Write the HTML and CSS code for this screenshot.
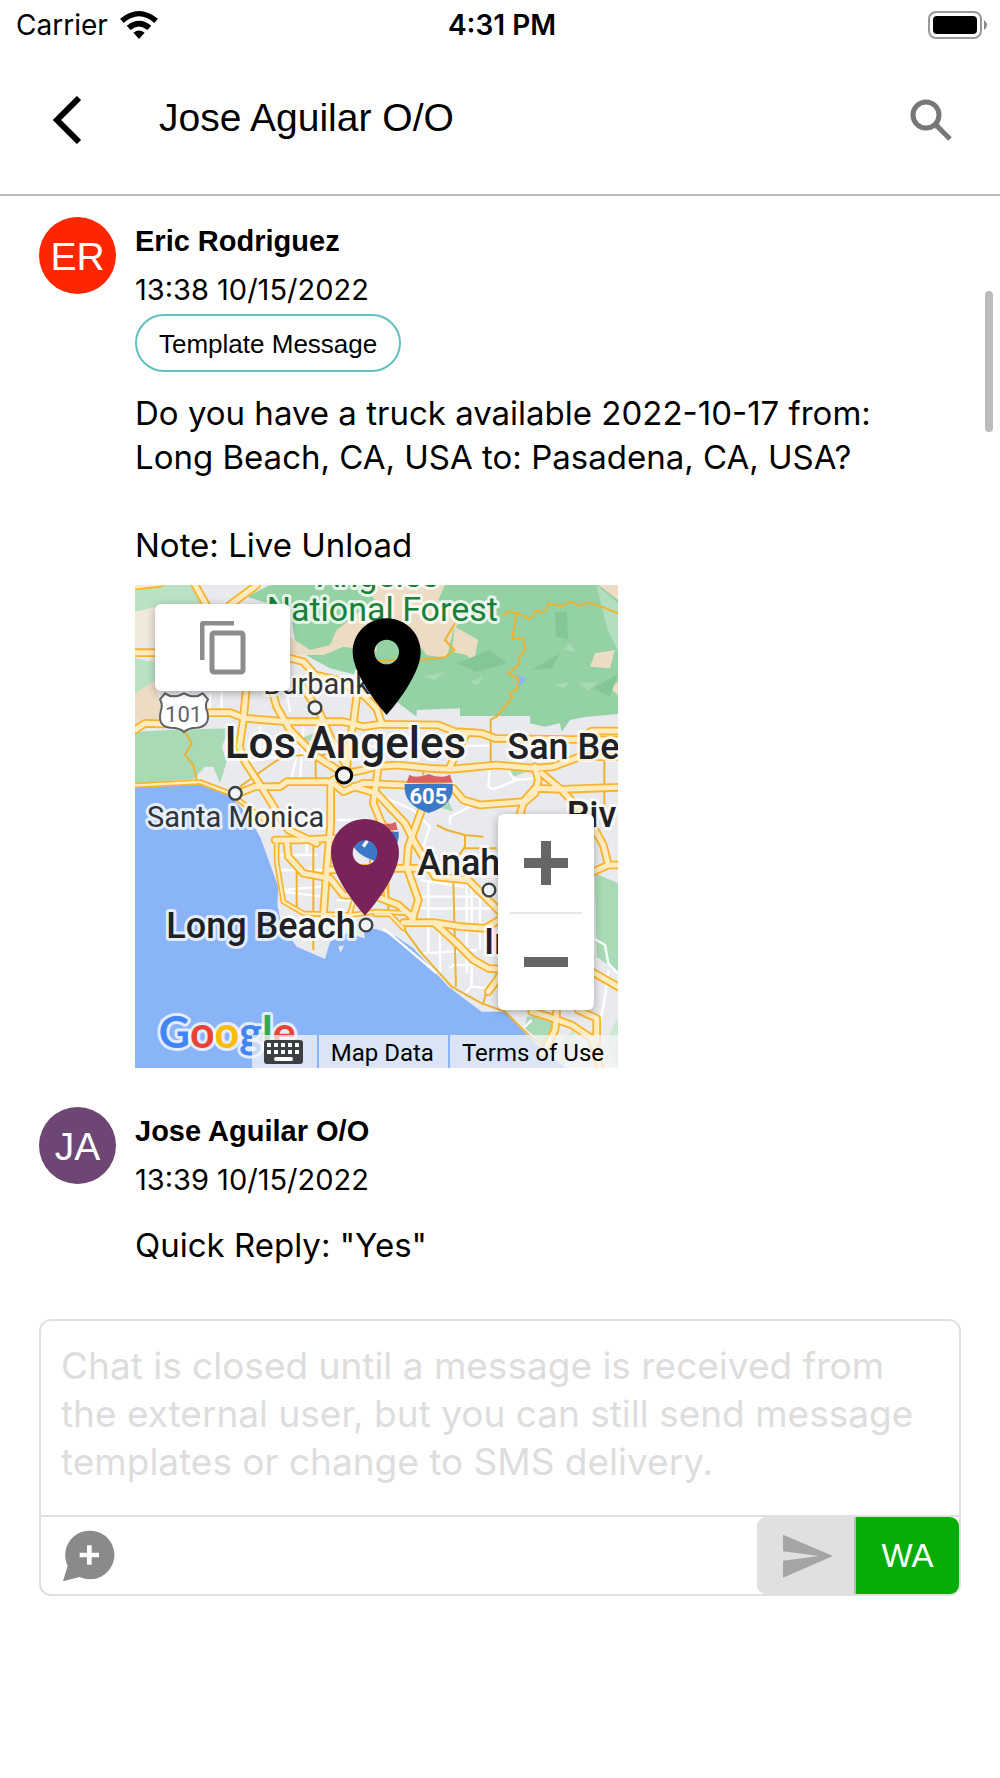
FILE: index.html
```html
<!DOCTYPE html>
<html lang="en">
<head>
  <meta charset="UTF-8">
  <title>Jose Aguilar O/O</title>
  <meta name="viewport" content="width=device-width, initial-scale=1.0">
  <link rel="stylesheet" href="styles.css">
</head>
<body>

  <div class="status-bar">
    <div class="carrier">
      <span>Carrier</span>
      <svg width="38" height="28" viewBox="0 0 108 80">
        <path d="M0 22Q54-22 108 22L98 34Q54-4 10 34Z"/>
        <path d="M19 42Q54 14 89 42L78 54Q54 34 30 54Z"/>
        <path d="M38 62Q54 50 70 62L54 80Z"/>
      </svg>
    </div>
    <div class="clock">4:31 PM</div>
    <div class="battery">
      <svg width="60" height="28" viewBox="0 0 60 28">
        <rect x="1" y="1" width="52" height="26" rx="7" fill="#fff" stroke="#999" stroke-width="2"/>
        <rect x="5" y="5" width="44" height="18" rx="4"/>
        <path d="M56 9Q62 14 56 19Z" fill="#888"/>
      </svg>
    </div>
  </div>

  <header class="topbar">
    <button class="icon-btn" aria-label="Back">
      <svg width="28" height="48" viewBox="0 0 28 48">
        <path d="M26 2L4 24L26 46" fill="none" stroke="#000" stroke-width="6"/>
      </svg>
    </button>
    <h1>Jose Aguilar O/O</h1>
    <button class="icon-btn" aria-label="Search">
      <svg width="42" height="42" viewBox="0 0 42 42" fill="none" stroke="#777">
        <circle cx="16" cy="16" r="13" stroke-width="5"/>
        <path d="M26 26L40 40" stroke-width="5"/>
        <path d="M25 29L29 25" stroke-width="3"/>
      </svg>
    </button>
  </header>

  <main class="thread">
    <div class="scrollbar"></div>

    <article class="message">
      <div class="avatar avatar-red">ER</div>
      <div class="content">
        <h2>Eric Rodriguez</h2>
        <time>13:38 10/15/2022</time>
        <span class="tag">Template Message</span>
        <p class="text">Do you have a truck available 2022-10-17 from: Long Beach, CA, USA to: Pasadena, CA, USA?<br><br>Note: Live Unload</p>

        <div class="map">
          <svg class="map-canvas" viewBox="15 15 1449 1449">
            <defs>
              <g id="highways">
                <path d="M15 450L45 430L100 432L240 398L300 398L345 415L470 425L640 425L700 440L750 433L925 435L975 455L1055 460L1095 475L1200 477L1464 480"/>
                <path d="M1360 470L1385 453L1464 453"/>
                <path d="M195 15L232 80M380 15L300 75M15 218L90 218M15 18L90 10"/>
                <path d="M480 235L520 245L555 285L620 300L700 345L740 385L755 430"/>
                <path d="M348 335L340 420L328 500L345 545L400 630L475 750L560 790"/>
                <path d="M430 345L440 380L480 450L560 530L640 580"/>
                <path d="M505 300L570 400L600 470L650 560M680 350L670 430L655 500L650 570"/>
                <path d="M320 642L375 620L450 620L470 605L600 605L650 580L700 570L735 560L800 555L900 565L960 568L1100 555L1215 565L1270 560L1350 530L1464 530"/>
                <path d="M602 610L602 735L590 870L580 1010"/>
                <path d="M610 610L640 635L700 610L820 615L970 625L1000 660L1050 675L1180 665L1215 625L1300 628L1464 622"/>
                <path d="M670 620L740 640L825 730L855 790L915 890L1015 900L1125 1010"/>
                <path d="M745 560L730 670L755 730L780 760M960 560L1010 460"/>
                <path d="M875 690L835 800L830 860L865 960L845 1025"/>
                <path d="M820 1028L915 1028L995 1040L1065 1045L1125 1010"/>
                <path d="M915 1030L980 1090L1030 1140L1075 1165L1115 1168L1105 1195L1075 1235"/>
                <path d="M435 780L505 780L615 775L720 775M470 780L475 830L520 880L600 895L640 945L740 950L805 975L850 1015"/>
                <path d="M595 870L700 865L905 865"/>
                <path d="M1215 560L1225 600L1215 640L1180 670L1165 720M1235 580L1295 630L1360 700L1400 760"/>
                <path d="M1395 750L1420 795L1435 855L1464 855M1380 880L1435 855"/>
                <path d="M1380 1172L1464 1220M1205 1295L1255 1310L1325 1335L1385 1375L1410 1464"/>
                <path d="M1345 1290L1400 1315L1400 1390M1280 1295L1275 1350L1240 1420"/>
              </g>
              <g id="small-highways">
                <path d="M15 616L210 606L300 640L430 740"/>
                <path d="M440 785L440 845L460 965L520 1000L660 1005L740 995L850 1000"/>
                <path d="M735 1003L780 1003L820 1045"/>
                <path d="M690 900L660 1000M760 870L770 960"/>
              </g>
            </defs>

            <rect x="15" y="15" width="1449" height="1449" fill="#e8eaed"/>

            <!-- parks and hills -->
            <path d="M15 15L180 15L225 75L75 90L15 95Z" fill="#b9e2c5"/>
            <path d="M15 95L80 80L80 190L15 190Z" fill="#f0e9dc"/>
            <path d="M15 270L75 230L80 330L110 430L15 445Z" fill="#ecdcc3"/>
            <path d="M15 235L80 250L80 300L15 340Z" fill="#b9e2c5"/>
            <path d="M15 455L120 450L300 445L275 500L290 545L270 610L250 560L225 560L190 598L15 610Z" fill="#a8dab5"/>
            <path d="M350 50L420 15L1464 15L1464 402L1370 410L1320 420L1295 455L1290 430L1245 440L1200 430L1200 408L990 408L990 385L860 390L860 410L800 365L735 330L680 285L600 265L500 210L480 90Z" fill="#94d2a5"/>
            <path d="M480 170L540 210L600 195L620 150L735 60L700 15L945 15L925 60L1000 110L970 150L950 235L890 225L840 160L740 130L740 215L640 200L580 225L480 225Z" fill="#ecdcc3"/>
            <path d="M975 140L1045 180L1030 250L1010 225L965 215Z" fill="#ecdcc3"/>
            <path d="M1395 220L1455 210L1440 265L1380 260ZM1464 305L1440 325L1464 345ZM1405 15L1464 15L1464 60Z" fill="#ecdcc3"/>
            <path d="M1400 15L1464 70L1464 215L1430 140Z" fill="#b3dfc0"/>
            <path d="M1275 95L1310 95L1315 180L1278 170ZM1205 270L1290 220L1265 265ZM980 250L1080 210L1130 250L1040 275ZM1390 325L1464 280L1440 350Z" fill="#84c698"/>
            <path d="M880 290L945 275L915 300ZM1020 305L1060 290L1040 315ZM1300 210L1320 190L1335 215ZM1275 315L1320 305L1300 325ZM1345 310L1405 305L1375 330Z" fill="#a8dab5"/>
            <path d="M1395 880L1464 910L1464 1175L1400 1130Z" fill="#a8dab5"/>
            <path d="M1190 1310L1275 1305L1280 1340L1240 1390L1185 1345Z" fill="#a8dab5"/>
            <path d="M1285 1395L1330 1350L1345 1420L1290 1464ZM1430 1380L1464 1310L1464 1464Z" fill="#c9e8d1"/>
            <path d="M1160 285L1190 295L1162 325Z" fill="#8ab4f8"/>
            <path d="M945 640L970 695L925 680ZM1130 570L1190 575L1150 590ZM515 475L575 450L560 490Z" fill="#a8dab5"/>

            <!-- ocean -->
            <path d="M15 620L210 610L295 642L345 695L390 770L445 920L442 975L455 1035L500 1100L585 1137L600 1085L650 1060L705 1075L700 1045L740 1048L800 1070L850 1105L955 1220L1055 1295L1125 1295L1185 1360L1305 1464L15 1464Z" fill="#8ab4f8"/>
            <path d="M625 1100L642 1096L632 1118Z" fill="#e8eaed"/>

            <g fill="none" stroke="#fff" stroke-width="7">
              <path d="M240 340L240 395M275 335L275 395M390 440L390 540M470 335L480 395M500 530L480 610M520 440L510 610"/>
              <path d="M345 545L600 510M360 500L550 500M700 500L1080 497M440 870L580 870M440 825L560 825M530 780L530 820M455 930L575 920M455 935L580 950M620 960L740 965M620 720L720 720"/>
              <path d="M735 640L850 690L900 740L880 800M1080 560L1075 620L1090 628L1160 600L1210 595M1135 570L1150 595L1175 600M960 735L960 710L1020 680L1060 670"/>
              <path d="M870 900L1000 920M870 950L1060 950M855 985L1120 985M895 900L895 1120M930 1040L930 1180M1010 890L1010 1180M1050 940L1050 1110M1025 920L1025 1050M880 1120L1040 1110M960 1165L970 1155L1090 1155M1025 1160L1025 1220L1000 1245M1025 1220L1080 1225M760 1045L850 1120L920 1180"/>
              <path d="M1390 1075L1425 1095L1435 1150L1464 1180M1435 1170L1425 1250L1410 1330M1180 1345L1205 1320"/>
            </g>

            <!-- secondary roads -->
            <g fill="none" stroke="#eeb232" stroke-width="6">
              <path d="M1120 105L1135 95L1165 100L1200 118L1220 90L1235 98L1250 90L1255 70L1295 78L1325 65L1345 78L1375 68L1415 80L1464 100"/>
              <path d="M1160 100L1147 175L1180 175L1185 210L1165 235L1170 250L1135 280L1165 295L1160 325L1140 340L1147 352L1100 410L1082 418L1082 555"/>
              <path d="M975 130L945 180L973 210L945 232L865 240L740 240"/>
              <path d="M165 455L185 490L165 525L190 555L200 600"/>
              <path d="M330 620L420 555L460 530L520 525M557 530L557 600M555 460L555 530L600 520M500 840L500 980M550 780L550 1110M720 760L720 860M775 730L775 1000"/>
              <path d="M805 1025L875 1120L965 1220L1055 1270L1125 1295L1195 1365L1280 1420M970 910L978 1220M1070 1230L1060 1270M1423 540L1423 730M880 570L880 610M920 735L950 750L1005 765L1060 770M1005 765L1005 800L970 850M1000 805L1100 805"/>
            </g>

            <g fill="none" stroke-linejoin="round" stroke-linecap="round">
              <use href="#small-highways" stroke="#f9b42d" stroke-width="17"/>
              <use href="#highways" stroke="#f9b42d" stroke-width="26"/>
              <use href="#small-highways" stroke="#ffebbd" stroke-width="7"/>
              <use href="#highways" stroke="#ffebbd" stroke-width="15"/>
            </g>

            <!-- road shields -->
            <path d="M105 340Q130 358 162 340Q194 358 218 340L234 358Q222 375 232 395Q242 440 200 443Q175 443 162 456Q150 443 122 443Q82 440 92 395Q100 375 90 358Z" fill="#fff" stroke="#5f6368" stroke-width="6"/>
            <text class="shield-text" x="161" y="425">101</text>
            <path d="M830 608L838 584Q860 598 896 582Q930 598 960 584L968 608Z" fill="#d9615f"/>
            <path d="M824 612L968 612Q975 675 896 699Q818 675 824 612Z" fill="#3c78c8"/>
            <text class="shield-text interstate" x="895" y="671">605</text>
            <path d="M668 750L675 726Q697 740 733 724Q767 740 797 726L803 750Z" fill="#d9615f"/>
            <path d="M661 755L806 755Q812 816 733 842Q655 816 661 755Z" fill="#3c78c8"/>
            <path d="M700 800L712 782" stroke="#fff" stroke-width="10"/>

            <!-- places -->
            <g fill="#f1f3f4" stroke="#3c4043" stroke-width="7">
              <circle cx="555" cy="383" r="19"/>
              <circle cx="316" cy="640" r="19"/>
              <circle cx="1077" cy="930" r="19"/>
              <circle cx="642" cy="586" r="23" stroke="#000" stroke-width="9"/>
            </g>
            <text class="park" x="562" y="22">Angeles</text>
            <text class="park" x="410" y="122">National Forest</text>
            <text class="town" x="400" y="342">Burbank</text>
            <text class="town" x="51" y="740">Santa Monica</text>
            <text class="metro" x="284" y="533">Los Angeles</text>
            <text class="city" x="1132" y="537">San Be</text>
            <text class="city" x="1310" y="742">Riv</text>
            <text class="city" x="862" y="884">Anah</text>
            <text class="city" x="1062" y="1122">Ir</text>
            <text class="city" x="109" y="1073">Long Beach</text>
            <circle cx="708" cy="1035" r="19" fill="#f1f3f4" stroke="#3c4043" stroke-width="7"/>

            <text class="google" x="86" y="1403"><tspan fill="#4285f4">G</tspan><tspan fill="#ea4335">o</tspan><tspan fill="#fbbc04">o</tspan><tspan fill="#4285f4">g</tspan><tspan fill="#34a853">l</tspan><tspan fill="#ea4335">e</tspan></text>

            <!-- pins -->
            <path fill-rule="evenodd" d="M770 115C714 115 668 160 668 216C668 292 770 405 770 405S872 292 872 216C872 160 826 115 770 115ZM770 179A37 37 0 1 1 770 253A37 37 0 1 1 770 179Z"/>
            <path fill="#7a235b" fill-rule="evenodd" d="M705 717C649 717 603 762 603 818C603 894 705 1007 705 1007S807 894 807 818C807 762 761 717 705 717ZM705 781A37 37 0 1 1 705 855A37 37 0 1 1 705 781Z"/>
          </svg>

          <button class="copy-btn" aria-label="Copy map">
            <svg width="46" height="54" viewBox="0 0 46 54" fill="none" stroke="#8c8c8c" stroke-width="5">
              <path d="M2 39V5Q2 2 5 2H34"/>
              <rect x="12" y="12" width="31" height="39" rx="2"/>
            </svg>
          </button>

          <div class="zoom">
            <button aria-label="Zoom in">
              <svg width="44" height="44" viewBox="0 0 44 44"><path d="M17 0H27V17H44V27H27V44H17V27H0V17H17Z" fill="#666"/></svg>
            </button>
            <button aria-label="Zoom out">
              <svg width="44" height="10" viewBox="0 0 44 10"><path d="M0 0H44V10H0Z" fill="#666"/></svg>
            </button>
          </div>

          <div class="map-footer">
            <button class="keyboard-btn" aria-label="Keyboard shortcuts">
              <svg width="39" height="24" viewBox="0 0 39 24">
                <rect width="39" height="24" rx="3" fill="#3c4043"/>
                <path d="M3 3h4v4h-4zM10 3h4v4h-4zM17 3h4v4h-4zM24 3h4v4h-4zM31 3h4v4h-4zM3 10h4v4h-4zM10 10h4v4h-4zM17 10h4v4h-4zM24 10h4v4h-4zM31 10h4v4h-4z" fill="#fff"/>
                <rect x="10" y="17" width="19" height="4" rx="2" fill="#fff"/>
              </svg>
            </button>
            <button>Map Data</button>
            <a href="#">Terms of Use</a>
          </div>
        </div>
      </div>
    </article>

    <article class="message">
      <div class="avatar avatar-purple">JA</div>
      <div class="content">
        <h2>Jose Aguilar O/O</h2>
        <time>13:39 10/15/2022</time>
        <p class="text">Quick Reply: "Yes"</p>
      </div>
    </article>
  </main>

  <form class="composer">
    <textarea aria-label="Message" rows="3" disabled placeholder="Chat is closed until a message is received from the external user, but you can still send message templates or change to SMS delivery."></textarea>
    <div class="actions">
      <button type="button" class="template-btn" aria-label="Add template">
        <svg width="52" height="52" viewBox="0 0 156 156">
          <path d="M79 2A73 73 0 1 1 50 141L0 154L14 107A73 73 0 0 1 79 2Z" fill="#8a8a8a"/>
          <path d="M72 46H86V68H108V82H86V104H72V82H50V68H72Z" fill="#fff"/>
        </svg>
      </button>
      <button type="button" class="send-btn" aria-label="Send" disabled>
        <svg width="50" height="44" viewBox="0 0 150 132">
          <path d="M0 2L150 66L0 131V80L108 66L0 52Z" fill="#a5a5a5"/>
        </svg>
      </button>
      <button type="button" class="channel-btn">WA</button>
    </div>
  </form>

</body>
</html>
```
FILE: styles.css
```css
* {
  box-sizing: border-box;
}
body {
  font-family: Inter, sans-serif;
  margin: 0;
  background: #fff;
  color: #000;
  display: flex;
  flex-direction: column;
  min-height: 100vh;
}
button {
  border: none;
  padding: 0;
  background: none;
  font: inherit;
  color: inherit;
  cursor: pointer;
}
svg {
  display: block;
}

.status-bar {
  display: grid;
  grid-template-columns: 1fr auto 1fr;
  align-items: center;
  height: 50px;
  padding: 0 12px 0 16px;
  font-size: 28px;
}
.carrier {
  display: flex;
  align-items: center;
  gap: 12px;
}
.clock {
  font-weight: 600;
}
.battery {
  justify-self: end;
}

.topbar {
  display: flex;
  align-items: center;
  height: 146px;
  padding: 0 48px 4px 53px;
  border-bottom: 2px solid #bbb;
}
.topbar h1 {
  flex: 1;
  margin: 0 0 5px 78px;
  font-family: "Liberation Sans", sans-serif;
  font-size: 39px;
  font-weight: 400;
}

.thread {
  flex: 1;
  position: relative;
  padding: 21px 39px 0;
}
.scrollbar {
  position: absolute;
  top: 95px;
  right: 7px;
  width: 8px;
  height: 141px;
  border-radius: 4px;
  background: #bbb;
}
.message {
  display: flex;
  gap: 19px;
  margin-bottom: 39px;
}
.message:last-child {
  margin-bottom: 0;
}
.avatar {
  display: flex;
  align-items: center;
  justify-content: center;
  flex-shrink: 0;
  width: 77px;
  height: 77px;
  padding-top: 3px;
  border-radius: 50%;
  color: #fff;
  font-family: "Liberation Sans", sans-serif;
  font-size: 39px;
}
.avatar-red {
  background: #ff2600;
}
.avatar-purple {
  background: #6d4673;
}
.content {
  flex: 1;
  padding-right: 24px;
}
.content h2 {
  margin: 0;
  font-family: "Liberation Sans", sans-serif;
  font-size: 29px;
  line-height: 48px;
}
.content time {
  display: block;
  font-size: 29px;
  line-height: 49px;
}
.tag {
  display: inline-block;
  height: 58px;
  padding: 0 22px;
  border: 2px solid #62bfc4;
  border-radius: 29px;
  font-family: "Liberation Sans", sans-serif;
  font-size: 26px;
  line-height: 56px;
}
.text {
  margin: 19px 0 18px;
  font-size: 33px;
  line-height: 44px;
}

.map {
  position: relative;
  max-width: 483px;
  font-family: Roboto, sans-serif;
  overflow: hidden;
}
.map-canvas {
  width: 100%;
}
.map-canvas text {
  paint-order: stroke;
  stroke: #fff;
  stroke-opacity: 0.75;
  stroke-width: 18px;
  stroke-linejoin: round;
  fill: #202124;
}
.map-canvas .park {
  font-size: 102px;
  fill: #188038;
}
.map-canvas .town {
  font-size: 87px;
  fill: #303336;
}
.map-canvas .city {
  font-size: 108px;
  font-weight: 500;
}
.map-canvas .metro {
  font-size: 132px;
  font-weight: 500;
}
.map-canvas .google {
  font-family: Lato, sans-serif;
  font-size: 129px;
  font-weight: 700;
}
.map-canvas .shield-text {
  font-size: 66px;
  text-anchor: middle;
  stroke: none;
  fill: #5f6368;
}
.map-canvas .interstate {
  font-weight: 700;
  fill: #fff;
}
.copy-btn,
.zoom {
  position: absolute;
  border-radius: 6px;
  background: #fff;
  box-shadow: 0 2px 8px rgba(0,0,0,0.3);
}
.copy-btn {
  top: 19px;
  left: 20px;
  display: flex;
  align-items: center;
  justify-content: center;
  width: 135px;
  height: 87px;
}
.zoom {
  right: 24px;
  bottom: 58px;
  display: flex;
  flex-direction: column;
  padding: 0 12px;
}
.zoom button {
  display: flex;
  align-items: center;
  justify-content: center;
  width: 72px;
  height: 98px;
}
.zoom button + button {
  border-top: 2px solid #e6e6e6;
}
.map-footer {
  position: absolute;
  right: 0;
  bottom: 0;
  display: flex;
  gap: 2px;
  height: 33px;
  font-size: 24px;
  line-height: 36px;
}
.map-footer > * {
  padding: 0 14px 0 12px;
  background: rgba(245,245,245,0.75);
  color: #000;
  text-decoration: none;
}

.composer {
  margin: 0 39px 182px;
  border: 2px solid #e0e0e0;
  border-radius: 12px;
}
.composer textarea {
  display: block;
  width: 100%;
  height: 194px;
  padding: 21px 20px 0;
  border: none;
  background: none;
  font: inherit;
  font-size: 37px;
  line-height: 48px;
  resize: none;
  overflow: hidden;
}
.composer textarea::placeholder {
  color: #ddd;
}
.actions {
  display: flex;
  height: 79px;
  border-top: 2px solid #e0e0e0;
}
.template-btn {
  margin: 0 auto 0 22px;
}
.send-btn {
  display: flex;
  align-items: center;
  justify-content: center;
  width: 99px;
  padding-left: 4px;
  border-right: 2px solid #bbb;
  border-radius: 9px 0 0 9px;
  background: #e0e0e0;
}
.channel-btn {
  width: 103px;
  border-radius: 0 9px 9px 0;
  background: #06ad06;
  color: #fff;
  font-family: "Liberation Sans", sans-serif;
  font-size: 33px;
}
```
